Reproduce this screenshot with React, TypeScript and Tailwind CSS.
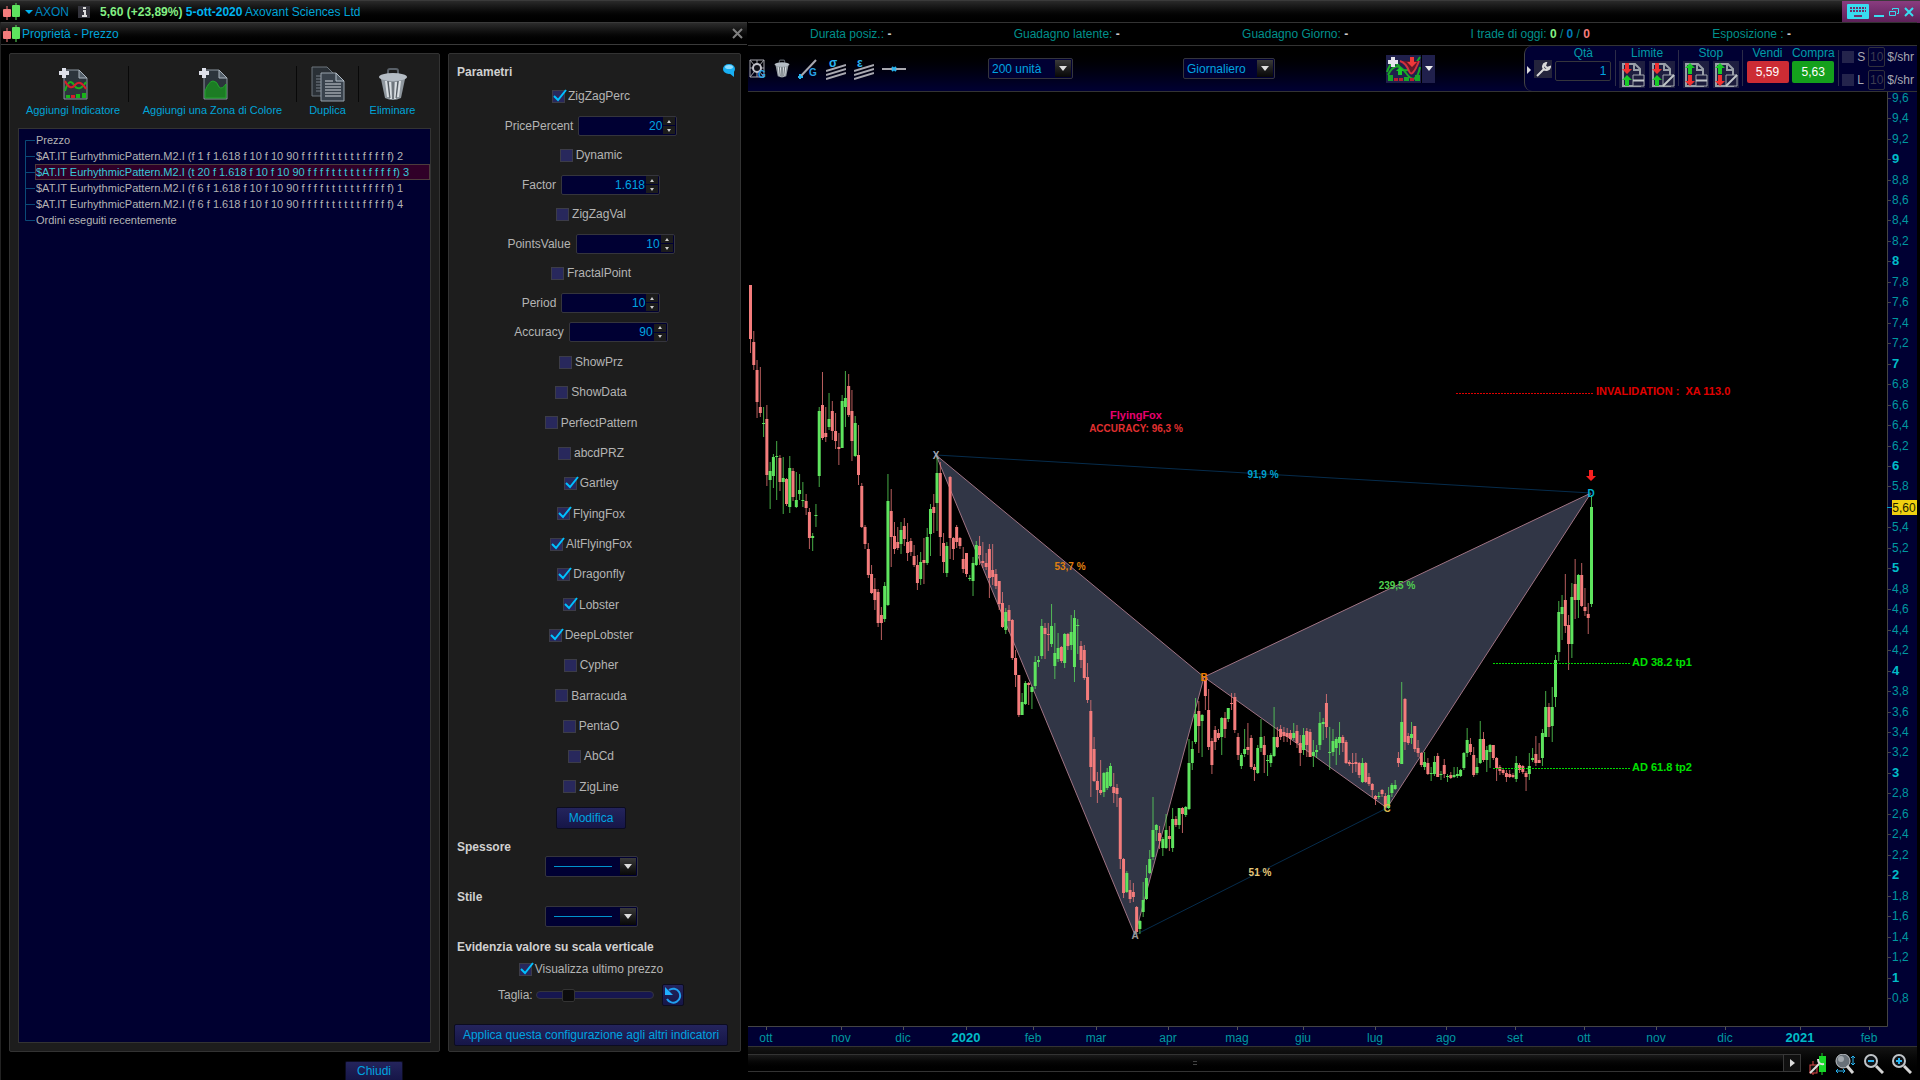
import { ReactNode, useState } from 'react';

type Candle = [up: number, high: number, top: number, bottom: number, low: number];

const CANDLES: Candle[] = [
  [0, 285, 285, 339, 353], [0, 331, 342, 365, 370], [0, 360, 370, 402, 418], [0, 367, 407, 413, 417], [1, 407, 423, 424, 437],
  [0, 405, 419, 475, 486], [1, 462, 471, 480, 509], [1, 454, 457, 476, 488], [1, 441, 456, 457, 500], [0, 455, 458, 482, 491],
  [1, 457, 478, 482, 514], [0, 478, 479, 504, 506], [1, 456, 468, 507, 513], [0, 468, 471, 497, 501], [1, 472, 500, 507, 508],
  [1, 474, 490, 494, 500], [1, 482, 500, 501, 507], [0, 494, 501, 508, 515], [0, 508, 512, 538, 549], [1, 533, 536, 538, 551],
  [1, 504, 515, 516, 527], [1, 407, 411, 476, 487], [0, 372, 405, 438, 440], [0, 407, 433, 437, 442], [1, 393, 419, 427, 430],
  [0, 401, 411, 431, 440], [0, 413, 431, 441, 449], [0, 433, 447, 449, 465], [1, 395, 401, 448, 448], [1, 371, 398, 407, 427],
  [0, 374, 386, 415, 417], [0, 390, 411, 441, 461], [1, 416, 423, 456, 457], [0, 425, 455, 475, 485], [0, 483, 486, 527, 528],
  [0, 525, 527, 544, 549], [0, 543, 549, 575, 578], [0, 565, 574, 593, 594], [0, 578, 589, 600, 610], [0, 589, 592, 623, 627],
  [0, 607, 615, 623, 640], [1, 582, 586, 619, 622], [1, 474, 501, 605, 606], [0, 489, 511, 537, 567], [0, 522, 536, 549, 554],
  [0, 527, 542, 548, 550], [1, 522, 530, 544, 554], [0, 518, 526, 539, 546], [0, 523, 542, 553, 561], [0, 538, 541, 552, 556],
  [0, 545, 556, 565, 567], [0, 555, 565, 583, 590], [1, 552, 562, 579, 585], [0, 538, 560, 563, 584], [1, 528, 537, 563, 565],
  [1, 504, 509, 534, 556], [0, 494, 507, 513, 533], [1, 457, 473, 503, 531], [0, 462, 473, 537, 556], [0, 533, 543, 562, 573],
  [1, 542, 546, 573, 577], [0, 476, 477, 538, 559], [0, 537, 538, 549, 560], [0, 525, 527, 542, 548], [0, 537, 538, 546, 549],
  [0, 547, 559, 569, 573], [0, 553, 553, 574, 577], [1, 575, 578, 579, 581], [1, 557, 563, 581, 596], [1, 541, 545, 565, 566],
  [0, 536, 546, 555, 565], [0, 542, 561, 563, 568], [0, 553, 563, 567, 570], [0, 544, 549, 578, 598], [0, 544, 570, 577, 585],
  [0, 569, 574, 586, 589], [0, 581, 581, 604, 610], [0, 592, 603, 627, 628], [1, 608, 612, 630, 634], [0, 605, 610, 621, 632],
  [0, 619, 620, 658, 660], [0, 650, 658, 675, 687], [0, 675, 675, 715, 717], [1, 693, 702, 715, 715], [1, 681, 683, 704, 705],
  [0, 682, 683, 685, 705], [1, 686, 687, 692, 709], [1, 656, 662, 686, 689], [1, 656, 660, 662, 667], [1, 619, 626, 656, 659],
  [0, 623, 628, 634, 659], [0, 623, 634, 635, 651], [1, 604, 626, 644, 647], [1, 623, 653, 666, 679], [1, 633, 648, 659, 662],
  [0, 646, 647, 661, 663], [1, 633, 634, 663, 668], [0, 633, 634, 646, 650], [1, 615, 632, 645, 650], [1, 610, 618, 667, 682],
  [1, 619, 625, 626, 654], [0, 641, 646, 660, 668], [0, 645, 650, 678, 680], [0, 663, 677, 700, 703], [0, 700, 711, 767, 797],
  [0, 737, 749, 781, 782], [0, 772, 781, 790, 803], [0, 760, 790, 793, 795], [1, 772, 773, 792, 797], [1, 768, 772, 788, 790],
  [1, 763, 766, 786, 787], [0, 773, 787, 793, 803], [0, 784, 788, 794, 807], [0, 797, 798, 859, 869], [0, 858, 859, 893, 898],
  [1, 871, 873, 892, 893], [0, 880, 890, 899, 903], [0, 883, 892, 897, 902], [0, 906, 907, 932, 934], [1, 920, 921, 929, 934],
  [1, 882, 900, 912, 917], [1, 865, 878, 899, 900], [1, 850, 859, 873, 874], [1, 797, 830, 857, 860], [1, 824, 825, 830, 841],
  [0, 826, 833, 841, 849], [1, 837, 839, 848, 856], [1, 814, 830, 848, 849], [0, 826, 836, 839, 851], [1, 808, 819, 848, 852],
  [0, 816, 819, 825, 827], [1, 808, 808, 825, 829], [0, 807, 808, 814, 833], [1, 806, 807, 815, 817], [1, 739, 763, 809, 810],
  [1, 741, 749, 763, 770], [1, 698, 714, 742, 744], [0, 701, 711, 726, 753], [1, 714, 715, 721, 757], [0, 677, 680, 696, 710],
  [0, 689, 710, 747, 750], [0, 738, 741, 765, 774], [0, 726, 730, 742, 750], [0, 729, 733, 738, 740], [1, 717, 718, 737, 755],
  [0, 712, 718, 729, 738], [1, 708, 708, 719, 722], [0, 693, 703, 704, 710], [0, 693, 697, 730, 733], [0, 733, 737, 755, 760],
  [1, 753, 755, 766, 769], [1, 729, 749, 754, 757], [0, 723, 747, 750, 755], [0, 735, 738, 767, 769], [0, 764, 767, 770, 781],
  [1, 745, 748, 773, 774], [1, 719, 737, 748, 752], [0, 736, 745, 755, 773], [1, 755, 760, 761, 776], [1, 753, 755, 763, 767],
  [1, 707, 737, 756, 757], [0, 727, 737, 747, 748], [0, 725, 729, 737, 740], [0, 727, 732, 736, 742], [0, 728, 733, 737, 742],
  [0, 730, 733, 739, 745], [1, 723, 733, 738, 740], [0, 725, 731, 743, 748], [0, 735, 743, 753, 766], [1, 728, 735, 750, 755],
  [0, 728, 731, 745, 757], [0, 729, 732, 757, 757], [1, 740, 752, 756, 767], [1, 745, 750, 752, 758], [1, 712, 723, 745, 750],
  [1, 718, 722, 724, 740], [0, 694, 703, 727, 738], [1, 727, 752, 753, 770], [1, 729, 741, 752, 756], [1, 737, 739, 748, 765],
  [1, 722, 737, 743, 755], [0, 735, 737, 743, 752], [0, 740, 742, 763, 764], [0, 760, 762, 764, 766], [0, 753, 763, 764, 773],
  [0, 753, 762, 764, 772], [0, 762, 763, 775, 778], [1, 758, 763, 782, 783], [0, 762, 763, 782, 783], [0, 773, 777, 784, 786],
  [0, 783, 784, 790, 797], [0, 795, 796, 799, 805], [1, 792, 796, 797, 799], [0, 789, 790, 794, 797], [0, 793, 796, 807, 808],
  [1, 787, 795, 808, 809], [1, 783, 785, 793, 797], [1, 780, 785, 789, 790], [0, 752, 758, 763, 767], [1, 682, 722, 764, 764],
  [0, 698, 699, 742, 750], [0, 733, 736, 743, 745], [1, 722, 734, 738, 744], [0, 726, 726, 749, 752], [0, 740, 748, 753, 757],
  [0, 752, 753, 765, 767], [1, 752, 762, 767, 770], [0, 758, 763, 774, 775], [1, 767, 773, 774, 781], [1, 756, 762, 774, 776],
  [0, 753, 756, 777, 777], [1, 771, 774, 775, 780], [0, 759, 765, 774, 778], [1, 774, 776, 777, 782], [0, 772, 775, 778, 779],
  [1, 767, 775, 777, 778], [1, 767, 774, 776, 778], [1, 769, 770, 776, 777], [1, 752, 753, 768, 770], [1, 728, 740, 753, 757],
  [0, 738, 744, 752, 755], [0, 747, 755, 775, 777], [1, 758, 767, 773, 775], [1, 721, 739, 763, 764], [0, 732, 739, 760, 762],
  [1, 746, 750, 760, 772], [1, 744, 745, 752, 768], [0, 745, 745, 758, 760], [0, 757, 758, 768, 781], [0, 765, 767, 771, 775],
  [0, 768, 770, 773, 775], [0, 770, 773, 777, 782], [0, 770, 774, 777, 778], [0, 773, 775, 777, 778], [1, 756, 763, 779, 782],
  [0, 763, 765, 770, 773], [0, 765, 766, 772, 774], [0, 771, 773, 777, 791], [1, 753, 766, 774, 780], [1, 748, 758, 760, 762],
  [0, 736, 754, 763, 766], [0, 743, 760, 763, 763], [1, 729, 733, 758, 766], [1, 691, 707, 737, 737], [0, 703, 707, 727, 737],
  [1, 687, 707, 726, 742], [1, 655, 660, 697, 707], [1, 601, 612, 652, 661], [1, 595, 607, 614, 640], [0, 574, 600, 626, 633],
  [0, 615, 625, 644, 670], [1, 583, 597, 644, 658], [0, 559, 584, 600, 619], [1, 574, 575, 600, 618], [0, 563, 575, 606, 607],
  [0, 588, 607, 611, 616], [0, 603, 614, 618, 634], [1, 495, 507, 604, 607],
];

const MONTHS: [string, number][] = [
  ['ott', 766], ['nov', 841], ['dic', 903], ['2020', 966], ['feb', 1033], ['mar', 1096], ['apr', 1168], ['mag', 1237],
  ['giu', 1303], ['lug', 1375], ['ago', 1446], ['set', 1515], ['ott', 1584], ['nov', 1656], ['dic', 1725], ['2021', 1800], ['feb', 1869],
];

const PRICES = Array.from({ length: 45 }, (_, i) => (96 - i * 2) / 10);
const priceY = (p: number) => 466 + (6 - p) * 102.3;

const INDICATORS = [
  'Prezzo',
  '$AT.IT EurhythmicPattern.M2.I (f 1 f 1.618 f 10 f 10 90 f f f f t t t t t t f f f f f) 2',
  '$AT.IT EurhythmicPattern.M2.I (t 20 f 1.618 f 10 f 10 90 f f f f t t t t t t f f f f f) 3',
  '$AT.IT EurhythmicPattern.M2.I (f 6 f 1.618 f 10 f 10 90 f f f f t t t t t t f f f f f) 1',
  '$AT.IT EurhythmicPattern.M2.I (f 6 f 1.618 f 10 f 10 90 f f f f t t t t t t f f f f f) 4',
  'Ordini eseguiti recentemente',
];

const FLAGS: [string, boolean][] = [
  ['PerfectPattern', false], ['abcdPRZ', false], ['Gartley', true], ['FlyingFox', true], ['AltFlyingFox', true],
  ['Dragonfly', true], ['Lobster', true], ['DeepLobster', true], ['Cypher', false], ['Barracuda', false],
  ['PentaO', false], ['AbCd', false], ['ZigLine', false],
];

function CandlePair() {
  return (
    <svg width="18" height="17" viewBox="0 0 18 17" className="shrink-0">
      <path d="M4 3v14" stroke="#f47c7c" />
      <rect x="0" y="6" width="8" height="8" rx="1" fill="#f47c7c" />
      <path d="M13 0v17" stroke="#5ee45e" />
      <rect x="9" y="2" width="8" height="12" rx="1" fill="#5ee45e" />
    </svg>
  );
}

function PageIcon({ children }: { children: ReactNode }) {
  return (
    <svg width="30" height="34" viewBox="0 0 30 34">
      <path d="M6 3h15l8 8v21H6z" fill="#2c343c" stroke="#8a949e" />
      <path d="M21 3v8h8z" fill="#55606a" stroke="#a8b2bc" />
      {children}
      <path d="M6 1v10M1 6h10" stroke="#dde0ea" strokeWidth="4" />
    </svg>
  );
}

function DuplicateIcon() {
  return (
    <svg width="34" height="36" viewBox="0 0 34 36">
      <path d="M1 1h15l6 6v23H1z" fill="#2a3036" stroke="#6c757d" />
      <path d="M5 10h9M5 13h9M5 16h9M5 19h9M5 22h9M5 25h9" stroke="#777f88" />
      <path d="M10 7h15l8 8v20H10z" fill="#39424c" stroke="#98a2ac" />
      <path d="M25 7v8h8z" fill="#4d5862" stroke="#b4bec8" />
      <path d="M14 15h8M14 18h16M14 21h16M14 24h16M14 27h16M14 30h16" stroke="#d0d4da" />
    </svg>
  );
}

function TrashIcon({ small }: { small?: boolean }) {
  return (
    <svg width={small ? 16 : 30} height={small ? 19 : 34} viewBox="0 0 30 34" preserveAspectRatio="none">
      <path d="M10 8V4q0-2 2-2h6q2 0 2 2v4" fill="none" stroke="#596068" strokeWidth="2" />
      <path d="M3 12h24l-4 19q-8 4-16 0z" fill="#8f979e" />
      <ellipse cx="15" cy="10" rx="14" ry="4" fill="#b4bcc4" />
      <path d="M8 14l2 16M12 15l1 17M18 15l-1 17M22 14l-2 16" stroke="#d9dee2" strokeWidth="2" />
      <path d="M10 14l2 17M15 15v17M20 14l-2 17" stroke="#4e555b" />
    </svg>
  );
}

function ToolButton({ label, width, children }: { label: string; width: string; children: ReactNode }) {
  return (
    <button className={`${width} flex shrink-0 flex-col items-center whitespace-nowrap text-[11px] text-[#00a4d8]`}>
      <span className="flex h-9 items-center">{children}</span>
      <span className="leading-4">{label}</span>
    </button>
  );
}

function Check({ label, on = false }: { label: string; on?: boolean }) {
  const [checked, setChecked] = useState(on);
  return (
    <label className="flex h-5 items-center justify-center gap-[3px]">
      <span className="relative flex">
        <input
          type="checkbox"
          checked={checked}
          onChange={() => setChecked(!checked)}
          className="size-[13px] appearance-none border border-[#3c3c48] bg-[#28285c]"
        />
        {checked && (
          <svg width="14" height="13" viewBox="0 0 14 13" className="pointer-events-none absolute bottom-px left-px">
            <path d="M1 7l4 4 8-10" fill="none" stroke="#00c0ff" strokeWidth="2" />
          </svg>
        )}
      </span>
      {label}
    </label>
  );
}

function NumberField({ label, value }: { label: string; value: string }) {
  return (
    <div className="flex h-5 items-center justify-center gap-[5px]">
      <label htmlFor={label}>{label}</label>
      <div className="flex h-5 w-[99px] items-center rounded-xs border border-[#35353c] bg-[#000033]">
        <input id={label} defaultValue={value} className="w-full min-w-0 bg-transparent text-right text-[#00a4e0] outline-none" />
        <span className="flex shrink-0 flex-col gap-px px-px">
          <button aria-label={`${label} +`} className="flex h-2 w-3 items-center justify-center bg-[#1c1c1c]">
            <svg width="4" height="3" viewBox="0 0 4 3"><path d="M0 3l2-3 2 3z" fill="#ccc" /></svg>
          </button>
          <button aria-label={`${label} -`} className="flex h-2 w-3 items-center justify-center bg-[#1c1c1c]">
            <svg width="4" height="3" viewBox="0 0 4 3"><path d="M0 0l2 3 2-3z" fill="#ccc" /></svg>
          </button>
        </span>
      </div>
    </div>
  );
}

function Select({ label, width, options, line }: { label: string; width: string; options: string[]; line?: boolean }) {
  return (
    <div className={`${width} relative h-[21px] shrink-0`}>
      <select aria-label={label} className="h-full w-full appearance-none rounded-xs border border-[#35353c] bg-[#000033] pl-[3px] text-[#00a4e0]">
        {options.map(o => <option key={o}>{o}</option>)}
      </select>
      {line && <span className="pointer-events-none absolute top-[10px] left-[9px] h-px w-[58px] bg-[#0094cc]" />}
      <span className="pointer-events-none absolute top-[2px] right-[2px] flex h-[17px] w-4 items-center justify-center bg-linear-to-b from-[#3a3a3a] to-[#080808]">
        <svg width="8" height="5" viewBox="0 0 8 5"><path d="M0 0h8L4 5z" fill="#ddd" /></svg>
      </span>
    </div>
  );
}

const panel = 'rounded-xs border border-[#333] bg-[#1d1d1d]';
const blueButton = 'rounded-xs border border-[#0c0c20] bg-linear-to-b from-[#24245c] to-[#161648] text-[#00a4e0]';

function PropertiesDialog() {
  const [selected, setSelected] = useState(2);
  return (
    <section className="flex w-[747px] shrink-0 flex-col border-l border-[#222] text-[#b4b4b4]">
      <header className="flex h-[23px] shrink-0 items-center border-t border-b border-[#3a3a3a] bg-linear-to-b from-[#2c2c2c] to-black pl-[2px] text-[#00a4d8]">
        <CandlePair />
        <h2 className="flex-1 pl-px">Proprietà - Prezzo</h2>
        <button aria-label="Chiudi finestra" className="mr-1">
          <svg width="11" height="11" viewBox="0 0 11 11"><path d="M1 1l9 9M10 1l-9 9" stroke="#808080" strokeWidth="2" /></svg>
        </button>
      </header>

      <div className="flex min-h-0 flex-1 gap-2 pt-2 pl-2">
        <div className={`${panel} flex w-[431px] flex-col px-2 pb-2`}>
          <div className="flex h-[74px] shrink-0 items-end pb-[10px]">
            <ToolButton label="Aggiungi Indicatore" width="w-[110px]">
              <PageIcon>
                <path d="M7 24q4-14 9-6t12-3" fill="none" stroke="#18b418" strokeWidth="2" />
                <path d="M7 14q5 10 10 4t11 4" fill="none" stroke="#d81c2c" strokeWidth="2" />
                <path d="M8 28h4v3H8zM18 27h4v4h-4zM24 26h4v5h-4z" fill="#18b418" />
                <path d="M13 28h4v3h-4z" fill="#d81c2c" />
              </PageIcon>
            </ToolButton>
            <span className="mb-4 h-9 w-px bg-[#080808]" />
            <ToolButton label="Aggiungi una Zona di Colore" width="w-[167px]">
              <PageIcon>
                <path d="M7 24q4-10 8-10t6 6q3 3 7-3v14H7z" fill="#1c7c24" stroke="#22a42c" />
              </PageIcon>
            </ToolButton>
            <span className="mb-4 h-9 w-px bg-[#080808]" />
            <ToolButton label="Duplica" width="w-[61px]"><DuplicateIcon /></ToolButton>
            <span className="mb-4 h-9 w-px bg-[#080808]" />
            <ToolButton label="Eliminare" width="w-[67px]"><TrashIcon /></ToolButton>
          </div>
          <ul className="min-h-0 flex-1 border border-[#333] bg-[#000030] pt-[3px] pl-[6px] text-[11px]">
            {INDICATORS.map((name, i) => (
              <li key={name} className="flex h-4 items-center">
                <svg width="10" height="16" viewBox="0 0 10 16" className="shrink-0">
                  <path d={i === 0 ? 'M0.5 16V8.5H10' : i === 5 ? 'M0.5 0V8.5H10' : 'M0.5 0V16M0 8.5H10'} fill="none" stroke="#0a4a78" />
                </svg>
                <button
                  onClick={() => setSelected(i)}
                  className={`h-4 whitespace-nowrap border text-left leading-[14px] ${selected === i ? 'flex-1 border-[#4c3c3c] bg-[#300028] text-[#38c8d8]' : 'border-transparent'}`}
                >
                  {name}
                </button>
              </li>
            ))}
          </ul>
        </div>

        <div className={`${panel} flex w-[293px] flex-col pt-[10px] pr-3 pb-[5px] pl-[5px]`}>
          <div className="flex h-[22px] items-start pl-[3px]">
            <h3 className="flex-1 font-bold text-[#d0d0d0]">Parametri</h3>
            <button aria-label="Commento" className="-mr-2">
              <svg width="13" height="13" viewBox="0 0 13 13">
                <ellipse cx="6" cy="5" rx="6" ry="5" fill="#18b0f4" />
                <path d="M6 9l5 4V7z" fill="#18b0f4" />
                <ellipse cx="6" cy="3" rx="4" ry="2" fill="#8cdcff" />
              </svg>
            </button>
          </div>
          <div className="flex h-[256px] shrink-0 flex-col justify-between">
            <Check label="ZigZagPerc" on />
            <NumberField label="PricePercent" value="20" />
            <Check label="Dynamic" />
            <NumberField label="Factor" value="1.618" />
            <Check label="ZigZagVal" />
            <NumberField label="PointsValue" value="10" />
            <Check label="FractalPoint" />
            <NumberField label="Period" value="10" />
            <NumberField label="Accuracy" value="90" />
          </div>
          <div className="mt-[10px] flex h-[445px] shrink-0 flex-col justify-between">
            <Check label="ShowPrz" />
            <Check label="ShowData" />
            {FLAGS.map(([name, on]) => <Check key={name} label={name} on={on} />)}
          </div>
          <button className={`${blueButton} mt-[10px] h-[22px] w-[70px] self-center`}>Modifica</button>
          <h3 className="mt-[10px] pl-[3px] font-bold leading-4 text-[#d0d0d0]">Spessore</h3>
          <div className="mt-px flex justify-center">
            <Select label="Spessore" width="w-[93px]" options={['']} line />
          </div>
          <h3 className="mt-3 pl-[3px] font-bold leading-4 text-[#d0d0d0]">Stile</h3>
          <div className="mt-px flex justify-center">
            <Select label="Stile" width="w-[93px]" options={['']} line />
          </div>
          <h3 className="mt-3 pl-[3px] font-bold leading-4 text-[#d0d0d0]">Evidenzia valore su scala verticale</h3>
          <div className="mt-1"><Check label="Visualizza ultimo prezzo" on /></div>
          <div className="mt-[5px] flex h-[22px] items-center pl-[44px]">
            <label htmlFor="taglia" className="pr-[3px]">Taglia:</label>
            <input
              id="taglia"
              type="range"
              defaultValue={25}
              className="m-0 h-2 w-[118px] appearance-none rounded-full border border-[#35353c] bg-[#161650] [&::-webkit-slider-thumb]:size-[13px] [&::-webkit-slider-thumb]:appearance-none [&::-webkit-slider-thumb]:rounded-xs [&::-webkit-slider-thumb]:border [&::-webkit-slider-thumb]:border-[#333] [&::-webkit-slider-thumb]:bg-[#0c0c0c]"
            />
            <button aria-label="Ripristina" className={`${blueButton} ml-2 flex size-[22px] items-center justify-center`}>
              <svg width="18" height="18" viewBox="0 0 18 18" className="shrink-0">
                <path d="M5 4a7 7 0 1 1-2 9" fill="none" stroke="#20a0f0" strokeWidth="2" />
                <path d="M1 1v8h8z" fill="#20b0ff" />
              </svg>
            </button>
          </div>
          <button className={`${blueButton} mt-auto h-[22px] w-full whitespace-nowrap`}>
            Applica questa configurazione agli altri indicatori
          </button>
        </div>
      </div>
      <div className="flex h-[28px] shrink-0 items-end justify-center">
        <button className={`${blueButton} h-[19px] w-[58px] rounded-b-none border-b-0`}>Chiudi</button>
      </div>
    </section>
  );
}

function OrderIcon({ stop, slash }: { stop?: boolean; slash?: boolean }) {
  const [first, second] = stop ? ['#18c828', '#f03030'] : ['#f03030', '#18c828'];
  const down = 'M4 0h4v6h3L6 11 1 6h3z';
  const up = 'M6 0l5 5H8v6H4V5H1z';
  return (
    <svg width="25" height="26" viewBox="0 0 25 26">
      <path d="M3 2h12l5 5v17H3z" fill="none" stroke="#9aa0a8" strokeWidth="2" />
      <path d="M14 2v6h6" fill="none" stroke="#9aa0a8" strokeWidth="2" />
      <path d={stop ? up : down} fill={first} transform="translate(1 1)" />
      <path d={stop ? down : up} fill={second} transform="translate(1 13)" />
      <path d="M13 13h11v11H13z" fill="#1c1c3c" stroke="#a0a4ac" />
      <path d={slash ? 'M13 24l11-11' : 'M13 18.5h11'} stroke="#c0c4c8" strokeWidth="2" />
    </svg>
  );
}

function OrderPanel() {
  const small = 'flex h-[27px] w-[26px] items-center justify-center bg-[#1e1e40]';
  const sep = 'mt-1 h-9 w-px bg-[#2c2c48]';
  return (
    <div className="relative ml-auto flex h-full w-[393px] shrink-0 items-start justify-between rounded-l-lg border-l border-[#444] bg-[#000033] pr-[3px] pl-[9px] text-[#009ca8]">
      <svg width="4" height="8" viewBox="0 0 4 8" className="absolute top-[20px] left-[2px]"><path d="M0 0l4 4-4 4z" fill="#ddd" /></svg>
      <button aria-label="Impostazioni ordini" className="mt-[14px] flex size-[18px] items-center justify-center bg-[#24243c]">
        <svg width="15" height="15" viewBox="0 0 15 15">
          <path d="M1 14l7-7M8 2q-2 3 0 5t5 0l1-2-3 1-2-2 1-3z" fill="none" stroke="#d8d8d8" strokeWidth="2" />
        </svg>
      </button>
      <label className="flex w-[56px] flex-col items-center">
        <span className="h-[15px] leading-[15px]">Qtà</span>
        <input defaultValue="1" className="h-[20px] w-full rounded-xs border border-[#35353c] bg-[#00002c] pr-1 text-right text-[#00a4e0]" />
      </label>
      <span className={sep} />
      <div className="flex flex-col items-center">
        <span className="h-[15px] leading-[15px]">Limite</span>
        <div className="flex gap-1">
          <button aria-label="Limite" className={small}><OrderIcon /></button>
          <button aria-label="Limite OCO" className={small}><OrderIcon slash /></button>
        </div>
      </div>
      <span className={sep} />
      <div className="flex flex-col items-center">
        <span className="h-[15px] leading-[15px]">Stop</span>
        <div className="flex gap-1">
          <button aria-label="Stop" className={small}><OrderIcon stop /></button>
          <button aria-label="Stop OCO" className={small}><OrderIcon stop slash /></button>
        </div>
      </div>
      <span className={sep} />
      <div className="flex flex-col items-center">
        <span className="h-[15px] leading-[15px]">Vendi</span>
        <button className="h-[22px] w-[42px] rounded-xs bg-[#cc2c34] text-white">5,59</button>
      </div>
      <div className="flex flex-col items-center">
        <span className="h-[15px] leading-[15px]">Compra</span>
        <button className="h-[22px] w-[42px] rounded-xs bg-[#14a01c] text-white">5,63</button>
      </div>
      <span className={sep} />
      <div className="flex flex-col gap-[3px] pt-px text-[#a8a8b0]">
        {['S', 'L'].map(side => (
          <div key={side} className="flex h-5 items-center gap-[2px]">
            <label className="flex w-[24px] items-center gap-[3px]">
              <input type="checkbox" className="size-3 shrink-0 appearance-none bg-[#24244c]" />
              {side}
            </label>
            <input aria-label={`Distanza ${side}`} defaultValue="10" className="h-5 w-[17px] rounded-xs border border-[#30303c] bg-transparent text-center text-[#3c3c50]" />
            <span>$/shr</span>
          </div>
        ))}
      </div>
    </div>
  );
}

function Toolbar() {
  return (
    <div className="flex h-[46px] shrink-0 items-center border-b border-[#333] bg-linear-to-b from-black to-[#000033]">
      <div className="flex items-center gap-2 pl-px">
        <button aria-label="Griglia">
          <svg width="17" height="24" viewBox="0 0 17 24">
            <path d="M1 3h14v17H1zM1 3l14 17M15 3L1 20M8 3v17M1 11h14" fill="none" stroke="#a4a4ac" />
            <circle cx="8" cy="11" r="4" fill="#101018" stroke="#c0c0c8" strokeWidth="2" />
            <text x="9" y="21" fontSize="10" fontWeight="bold" fill="#28a4e8">G</text>
          </svg>
        </button>
        <button aria-label="Elimina"><TrashIcon small /></button>
        <button aria-label="Linea di tendenza">
          <svg width="20" height="22" viewBox="0 0 20 22">
            <path d="M2 19L18 2" stroke="#a8a8b0" strokeWidth="2" />
            <path d="M0 19h5M2 16v5" stroke="#28b4f0" strokeWidth="2" />
            <text x="11" y="18" fontSize="10" fontWeight="bold" fill="#28a4e8">G</text>
          </svg>
        </button>
        {['σ', 'ε'].map(s => (
          <button key={s} aria-label={`Canale ${s}`}>
            <svg width="20" height="28" viewBox="0 0 20 28">
              <path d="M0 16l20-6M0 20l20-6M0 24l20-6" stroke="#a8a8b0" strokeWidth="2" />
              <text x="3" y="12" fontSize="12" fontWeight="bold" fill="#28b4f0">{s}</text>
            </svg>
          </button>
        ))}
        <button aria-label="Linea orizzontale">
          <svg width="24" height="8" viewBox="0 0 24 8">
            <path d="M0 4h24" stroke="#a8a8b0" strokeWidth="2" />
            <path d="M10 2l4 4M14 2l-4 4" stroke="#28b4f0" strokeWidth="2" />
          </svg>
        </button>
      </div>
      <div className="ml-[82px]"><Select label="Unità" width="w-[85px]" options={['200 unità']} /></div>
      <div className="ml-[110px]"><Select label="Periodo" width="w-[92px]" options={['Giornaliero']} /></div>
      <div className="ml-[111px] flex h-7">
        <button aria-label="Indicatori" className="bg-[#20204c]">
          <svg width="35" height="27" viewBox="0 0 35 27">
            <path d="M1 17Q6 2 14 12t20-10" fill="none" stroke="#18a828" strokeWidth="2" />
            <path d="M14 6q6 2 9 10t10-10" fill="#641828" stroke="#d03040" strokeWidth="2" />
            <path d="M2 20q8-16 18-2t14-6" fill="none" stroke="#18a828" strokeWidth="2" />
            <path d="M7 2v10M2 7h10" stroke="#e4e4ec" strokeWidth="4" />
            <path d="M24 2h4v5h3l-5 5-5-5h3z" fill="#f03838" />
            <path d="M14 12l4 4h-2v4h-4v-4h-2z" fill="#18c828" />
            <path d="M2 20h5v6H2zM18 22h5v4h-5zM29 20h5v6h-5z" fill="#18a828" />
            <path d="M8 23h4v3H8zM13 23h4v3h-4zM24 23h4v3h-4z" fill="#b82030" />
          </svg>
        </button>
        <button aria-label="Altri indicatori" className="flex w-[14px] items-center justify-center border-l border-black bg-[#20204c]">
          <svg width="8" height="5" viewBox="0 0 8 5"><path d="M0 0h8L4 5z" fill="#eee" /></svg>
        </button>
      </div>
      <OrderPanel />
    </div>
  );
}

function Chart() {
  const step = 841 / (CANDLES.length - 1);
  return (
    <svg viewBox="748 92 1169 954" className="block h-full w-full" fontSize="12" textAnchor="middle">
      <path d="M748 1026H1887V92H1917V1046H748z" fill="#000033" />
      <path d="M748 1026.5H1887.5V92" fill="none" stroke="#444" />

      <g fill="#313646" stroke="#a07484" strokeWidth="1">
        <path d="M936 455L1204 677L1135 935z" />
        <path d="M1204 677L1591 493L1387 808z" />
      </g>
      <path d="M936 455L1591 493M1135 935L1387 808" stroke="#062c4c" />

      {CANDLES.map(([up, high, top, bottom, low], i) => {
        const x = 750 + i * step;
        const color = up ? '#5ee45e' : '#f47c7c';
        return (
          <g key={i} fill={color}>
            <rect x={x} y={high} width="1" height={Math.max(low - high, 1)} opacity="0.75" />
            <rect x={x - 1} y={top} width="3" height={Math.max(bottom - top, 1)} />
          </g>
        );
      })}

      <path d="M1456 393.5H1594" stroke="#e00000" strokeDasharray="2 1" />
      <path d="M1493 663.5H1630M1493 768.5H1630" stroke="#00d800" strokeDasharray="2 1" />
      <path d="M1589 470h4v6h3l-5 5-5-5h3z" fill="#f82020" />

      <g fontSize="10" fontWeight="bold">
        <text x="936" y="459" fill="#a0a8b8">X</text>
        <text x="1135" y="939" fill="#989898">A</text>
        <text x="1204" y="681" fill="#f08000">B</text>
        <text x="1387" y="812" fill="#d8b850">C</text>
        <text x="1591" y="497" fill="#00b0d0">D</text>
        <text x="1136" y="432" fill="#e03030">ACCURACY: 96,3 %</text>
        <text x="1263" y="478" fill="#00a0cc">91,9 %</text>
        <text x="1070" y="570" fill="#e08010">53,7 %</text>
        <text x="1397" y="589" fill="#50d050">239,5 %</text>
        <text x="1260" y="876" fill="#e8c878">51 %</text>
      </g>
      <g fontSize="11" fontWeight="bold">
        <text x="1136" y="419" fill="#e80070">FlyingFox</text>
        <g textAnchor="start">
          <text x="1596" y="395" fill="#e00000">{'INVALIDATION :\u00a0 XA 113.0'}</text>
          <text x="1632" y="666" fill="#00e000">AD 38.2 tp1</text>
          <text x="1632" y="771" fill="#00e000">AD 61.8 tp2</text>
        </g>
      </g>

      {PRICES.map(p => {
        const whole = Number.isInteger(p);
        const y = Math.round(priceY(p));
        if (p === 5.6) return null;
        return (
          <g key={p}>
            <path d={`M1888 ${y + 0.5}h3`} stroke="#444" />
            <text
              x="1892"
              y={y + 4}
              textAnchor="start"
              fontSize={whole ? 13 : 12}
              fontWeight={whole ? 'bold' : 'normal'}
              fill={whole ? '#00bcc8' : '#0098a0'}
            >
              {String(p).replace('.', ',')}
            </text>
          </g>
        );
      })}
      <path d="M1887 507.5h5" stroke="#00a0c8" />
      <rect x="1892" y="500" width="25" height="15" fill="#f0d010" />
      <text x="1904" y="512" fill="#201c00">5,60</text>

      {MONTHS.map(([name, x]) => {
        const year = name.startsWith('20');
        return (
          <g key={x}>
            <path d={`M${x + 0.5} 1027v3`} stroke="#555" />
            <text x={x} y="1042" fontSize={year ? 13 : 12} fontWeight={year ? 'bold' : 'normal'} fill={year ? '#00bcc8' : '#0098a0'}>
              {name}
            </text>
          </g>
        );
      })}
    </svg>
  );
}

function Magnifier({ sign }: { sign: string }) {
  return (
    <svg width="20" height="20" viewBox="0 0 20 20">
      <circle cx="7" cy="7" r="6" fill="#101418" stroke="#c0c4c8" strokeWidth="2" />
      <path d={sign} stroke="#28b4f0" strokeWidth="2" />
      <path d="M12 12l7 7" stroke="#d4d4d4" strokeWidth="3" />
    </svg>
  );
}

function ScrollRow() {
  return (
    <div className="flex h-[34px] shrink-0 items-center border-t border-[#333] bg-linear-to-b from-[#141414] to-black pr-[5px]">
      <div className="mb-px flex h-[18px] flex-1 items-center border-t border-b border-[#333] bg-linear-to-b from-[#1a1a1a] to-black">
        <span className="ml-[445px] h-1 w-1 border-t border-b border-[#444]" />
      </div>
      <button aria-label="Avanti" className="mb-px flex h-[18px] w-[18px] items-center justify-center border border-[#383838] bg-[#101010]">
        <svg width="5" height="8" viewBox="0 0 5 8"><path d="M0 0l5 4-5 4z" fill="#ddd" /></svg>
      </button>
      <div className="ml-2 flex items-center gap-2">
        <button aria-label="Stile grafico">
          <svg width="18" height="22" viewBox="0 0 18 22">
            <path d="M4 8v14" stroke="#e04848" />
            <rect x="1" y="12" width="7" height="8" fill="#101010" stroke="#e04848" />
            <path d="M13 0v22" stroke="#18d828" />
            <rect x="10" y="3" width="7" height="16" fill="#18d828" />
            <path d="M1 20l9-9M9 6q0 6 6 5" fill="none" stroke="#ddd" strokeWidth="2" />
          </svg>
        </button>
        <button aria-label="Adatta zoom">
          <svg width="21" height="20" viewBox="0 0 21 20">
            <circle cx="8" cy="7" r="7" fill="#687078" stroke="#c0c4c8" />
            <circle cx="6" cy="5" r="3" fill="#a0a6ac" />
            <path d="M12 12l6 7" stroke="#d4d4d4" strokeWidth="3" />
            <path d="M18 2v9M16 4l2-2 2 2M16 9l2 2 2-2M1 17h9M3 15l-2 2 2 2M8 15l2 2-2 2" fill="none" stroke="#28b4f0" />
          </svg>
        </button>
        <button aria-label="Riduci"><Magnifier sign="M4 7h6" /></button>
        <button aria-label="Ingrandisci"><Magnifier sign="M4 7h6M7 4v6" /></button>
      </div>
    </div>
  );
}

function WindowButtons() {
  return (
    <div className="flex h-[22px] w-[78px] items-center justify-between bg-linear-to-b from-[#8a3c80] to-[#5c2058] pr-[6px] pl-[5px]">
      <button aria-label="Tastiera">
        <svg width="22" height="15" viewBox="0 0 22 15">
          <rect width="22" height="15" rx="1" fill="#38dcf0" />
          <path d="M3 4h16M3 7h16" stroke="#70306c" strokeWidth="2" strokeDasharray="2 1" />
          <path d="M7 12h8" stroke="#70306c" strokeWidth="2" />
        </svg>
      </button>
      <button aria-label="Riduci a icona">
        <svg width="10" height="10" viewBox="0 0 10 10"><path d="M0 9h10" stroke="#38dcf0" strokeWidth="2" /></svg>
      </button>
      <button aria-label="Ripristina">
        <svg width="10" height="10" viewBox="0 0 10 10"><path d="M3.5 3V1.5h6v5H8M.5 4.5h6v4h-6z" fill="none" stroke="#38dcf0" /></svg>
      </button>
      <button aria-label="Chiudi applicazione">
        <svg width="10" height="10" viewBox="0 0 10 10"><path d="M1 1l8 8M9 1L1 9" stroke="#38dcf0" strokeWidth="2" /></svg>
      </button>
    </div>
  );
}

function App() {
  return (
    <div className="flex h-screen flex-col overflow-hidden bg-black font-['Liberation_Sans',Arial,sans-serif] text-[12px] leading-4">
      <header className="flex h-[22px] shrink-0 items-center border-t border-[#3a3a3a] bg-linear-to-b from-[#2a2a2a] to-black pl-[3px]">
        <CandlePair />
        <button className="ml-1 flex items-center gap-[2px] text-[#0088c0]">
          <svg width="8" height="4" viewBox="0 0 8 4"><path d="M0 0h8L4 4z" fill="#00b4f0" /></svg>
          AXON
        </button>
        <button aria-label="Informazioni" className="ml-[9px] flex">
          <svg width="12" height="12" viewBox="0 0 12 12">
            <rect width="12" height="12" fill="#34343c" />
            <path d="M5 2h3M5 5h2v5M4 10h5" stroke="#ddd" strokeWidth="2" fill="none" />
          </svg>
        </button>
        <p className="flex-1 whitespace-nowrap pl-[10px] text-[#00a4d8]">
          <b className="text-[#84f084]">5,60 (+23,89%)</b> <b className="text-[#00b4f0]">5-ott-2020</b> Axovant Sciences Ltd
        </p>
        <WindowButtons />
      </header>

      <div className="flex min-h-0 flex-1">
        <PropertiesDialog />
        <main className="ml-px mr-[3px] flex min-w-0 flex-1 flex-col">
          <div className="flex h-[24px] shrink-0 items-center justify-between border-t border-b border-[#333] pr-[126px] pl-[62px] text-[#00908c]">
            <span>Durata posiz.: <b className="text-[#ccc]">-</b></span>
            <span>Guadagno latente: <b className="text-[#ccc]">-</b></span>
            <span>Guadagno Giorno: <b className="text-[#ccc]">-</b></span>
            <span>
              I trade di oggi: <b className="text-[#84f084]">0</b> / <b className="text-[#0078b8]">0</b> / <b className="text-[#f47c7c]">0</b>
            </span>
            <span>Esposizione : <b className="text-[#ccc]">-</b></span>
          </div>
          <Toolbar />
          <div className="min-h-0 flex-1"><Chart /></div>
          <ScrollRow />
        </main>
      </div>
    </div>
  );
}

export default App;
